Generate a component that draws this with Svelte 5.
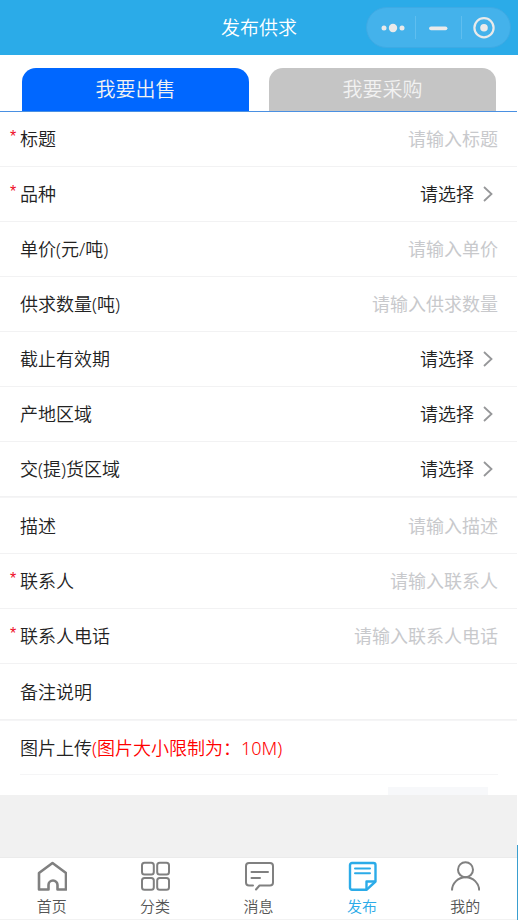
<script lang="ts">
  type Field = {
    id: string;
    label: string;
    kind: "text" | "select" | "textarea";
    placeholder?: string;
    required?: boolean;
    type?: "text" | "tel";
    section?: boolean;
  };

  const modes = [
    { id: "sell", label: "我要出售" },
    { id: "buy", label: "我要采购" },
  ];

  const fields: Field[] = [
    { id: "title", label: "标题", kind: "text", placeholder: "请输入标题", required: true },
    { id: "variety", label: "品种", kind: "select", required: true },
    { id: "price", label: "单价(元/吨)", kind: "text", placeholder: "请输入单价" },
    { id: "amount", label: "供求数量(吨)", kind: "text", placeholder: "请输入供求数量" },
    { id: "expires", label: "截止有效期", kind: "select" },
    { id: "origin", label: "产地区域", kind: "select" },
    { id: "delivery", label: "交(提)货区域", kind: "select" },
    { id: "description", label: "描述", kind: "textarea", placeholder: "请输入描述", section: true },
    { id: "contact", label: "联系人", kind: "text", placeholder: "请输入联系人", required: true },
    { id: "phone", label: "联系人电话", kind: "text", type: "tel", placeholder: "请输入联系人电话", required: true },
    { id: "remark", label: "备注说明", kind: "textarea" },
  ];

  const tabs = [
    { id: "home", label: "首页" },
    { id: "category", label: "分类" },
    { id: "message", label: "消息" },
    { id: "publish", label: "发布" },
    { id: "mine", label: "我的" },
  ];

  let mode = $state("sell");
  let activeTab = $state("publish");
  let values = $state<Record<string, string>>(Object.fromEntries(fields.map((f) => [f.id, ""])));
</script>

<div class="app">
  <header class="navbar">
    <h1>发布供求</h1>
    <div class="capsule">
      <button type="button" aria-label="更多">
        <svg width="24" height="24" viewBox="0 0 24 24" fill="currentColor">
          <circle cx="3" cy="12" r="2.5" />
          <circle cx="12" cy="12" r="4.2" />
          <circle cx="21" cy="12" r="2.5" />
        </svg>
      </button>
      <button type="button" aria-label="最小化">
        <svg width="24" height="24" viewBox="0 0 24 24" fill="none" stroke="currentColor">
          <path d="M5 12.3h14.5" stroke-width="3.8" stroke-linecap="round" />
        </svg>
      </button>
      <button type="button" aria-label="关闭">
        <svg width="24" height="24" viewBox="0 0 24 24" fill="none" stroke="currentColor">
          <circle cx="12" cy="11.8" r="9.6" stroke-width="2.2" />
          <circle cx="12" cy="11.8" r="3.8" fill="currentColor" stroke="none" />
        </svg>
      </button>
    </div>
  </header>

  <div class="modes" role="tablist">
    {#each modes as m (m.id)}
      <button
        type="button"
        role="tab"
        class="mode"
        class:active={mode === m.id}
        aria-selected={mode === m.id}
        onclick={() => (mode = m.id)}
      >
        {m.label}
      </button>
    {/each}
  </div>

  <form class="form">
    {#each fields as field (field.id)}
      <div class="cell" class:tall={field.kind === "textarea"} class:section={field.section}>
        <span class="mark" aria-hidden="true">{field.required ? "*" : ""}</span>
        <label for={field.id}>{field.label}</label>
        {#if field.kind === "select"}
          <select id={field.id} bind:value={values[field.id]} required={field.required}>
            <option value="">请选择</option>
          </select>
          <svg class="arrow" width="10" height="16" viewBox="0 0 10 16" fill="none" aria-hidden="true">
            <path d="M1 1l7.5 7L1 15" stroke="currentColor" stroke-width="1.8" />
          </svg>
        {:else if field.kind === "textarea"}
          <textarea id={field.id} rows="1" placeholder={field.placeholder} bind:value={values[field.id]}></textarea>
        {:else}
          <input
            id={field.id}
            type={field.type ?? "text"}
            placeholder={field.placeholder}
            required={field.required}
            bind:value={values[field.id]}
          />
        {/if}
      </div>
    {/each}

    <div class="cell section last">
      <span class="mark"></span>
      <label for="images">图片上传<span class="limit">(图片大小限制为：10M)</span></label>
    </div>
    <div class="uploader">
      <input id="images" type="file" accept="image/*" multiple />
    </div>
  </form>

  <div class="spacer"></div>

  <nav class="tabbar">
    {#each tabs as tab (tab.id)}
      <a
        href={`#${tab.id}`}
        class="tab"
        class:active={activeTab === tab.id}
        aria-current={activeTab === tab.id ? "page" : undefined}
        onclick={() => (activeTab = tab.id)}
      >
        <svg width="30" height="30" viewBox="0 0 30 30" fill="none" stroke="currentColor" stroke-width="2" aria-hidden="true">
          {#if tab.id === "home"}
            <path d="M2 28.5V12L15.5 2 29 12v16.5h-8.5V24a4.5 4.5 0 0 0-9 0v4.5z" stroke-width="2.6" stroke-linejoin="round" />
          {:else if tab.id === "category"}
            <rect x="2" y="1.8" width="11.8" height="11.8" rx="2.5" />
            <rect x="17.2" y="1.8" width="11.8" height="11.8" rx="2.5" />
            <rect x="2" y="17" width="11.8" height="11.8" rx="2.5" />
            <rect x="17.2" y="17" width="11.8" height="11.8" rx="2.5" />
          {:else if tab.id === "message"}
            <g stroke-linecap="round" stroke-linejoin="round">
              <path d="M9 24.500H5a3 3 0 0 1-3-3V5a3 3 0 0 1 3-3h21a3 3 0 0 1 3 3v16.500a3 3 0 0 1-3 3H15.500l-3.500 4" />
              <path d="M7.5 11H24M7.5 17H16" />
            </g>
          {:else if tab.id === "publish"}
            <g stroke-width="2.4" stroke-linejoin="round">
              <path d="M19.500 28.800H5A2 2 0 0 1 3 26.800V4a2 2 0 0 1 2-2h21.500a2 2 0 0 1 2 2v16.500z" />
              <path d="M28 20.5h-8.5v8" />
              <path d="M8 7.5h15M8 12.3h15" stroke-linecap="round" stroke-width="2" />
            </g>
          {:else}
            <circle cx="15.5" cy="8.7" r="7.5" />
            <path d="M2 29.5a13.6 13.3 0 0 1 27.2 0" />
          {/if}
        </svg>
        <span>{tab.label}</span>
      </a>
    {/each}
  </nav>
  <div class="edge"></div>
</div>

<style>
  :global(body) {
    background: #fff;
  }

  .app {
    position: relative;
    display: flex;
    flex-direction: column;
    height: 100vh;
    overflow: hidden;
    background: #fff;
    color: #222;
    font-family: "Noto Sans", "Noto Sans CJK SC", sans-serif;
    font-weight: 350;
    font-size: 18px;
    line-height: 24px;
  }

  button,
  input,
  select,
  textarea {
    margin: 0;
    padding: 0;
    border: 0;
    border-radius: 0;
    background: none;
    color: inherit;
    font: inherit;
  }

  button,
  select {
    cursor: pointer;
  }

  .navbar {
    display: grid;
    grid-template-columns: 1fr auto 1fr;
    flex: none;
    align-items: center;
    height: 55px;
    background: #2babe8;
    color: #fff;
  }

  h1 {
    grid-column: 2;
    margin: 0;
    font-size: 19px;
    font-weight: 350;
  }

  .capsule {
    display: flex;
    justify-self: end;
    box-sizing: border-box;
    width: 145px;
    height: 41px;
    margin-right: 7px;
    padding: 8px 0;
    border: 1px solid #3eaae4;
    border-radius: 21px;
    background: #44b2eb;
    color: #eaeaea;
  }

  .capsule button {
    display: flex;
    flex: 1;
    align-items: center;
    justify-content: center;
  }

  .capsule button:first-child {
    padding-left: 4px;
  }

  .capsule button:last-child {
    padding-right: 4px;
  }

  .capsule button + button {
    border-left: 1px solid #5fbeef;
  }

  .modes {
    display: flex;
    flex: none;
    gap: 20px;
    margin-right: 1px;
    padding: 13px 21px 0 22px;
    border-bottom: 1px solid #4a90e2;
  }

  .mode {
    flex: 1;
    height: 43px;
    border-radius: 14px 14px 0 0;
    background: #c5c5c5;
    color: #f2f2f2;
    font-size: 20px;
  }

  .mode.active {
    background: #0067ff;
  }

  .form {
    flex: 1;
    min-height: 0;
    margin-right: 1px;
    overflow-y: auto;
    scrollbar-width: none;
  }

  .cell {
    display: flex;
    align-items: center;
    box-sizing: border-box;
    height: 55px;
    padding: 0 19px 0 10px;
    border-bottom: 1px solid #f2f2f3;
  }

  .cell.tall {
    height: 56px;
  }

  .cell.section {
    border-top: 1px solid #f5f5f6;
  }

  .cell.tall.section {
    height: 57px;
  }

  .mark {
    flex: none;
    width: 10px;
    padding-bottom: 5px;
    color: #ee0a24;
    font-family: "Liberation Sans", sans-serif;
    font-weight: 400;
    font-size: 16px;
  }

  .cell label {
    flex: none;
  }

  .limit {
    color: #f00;
  }

  .cell input,
  .cell select,
  .cell textarea {
    flex: 1;
    min-width: 0;
    height: 24px;
    outline: none;
    text-align: right;
  }

  .cell textarea {
    resize: none;
    overflow: hidden;
  }

  .cell select {
    appearance: none;
    text-align-last: right;
  }

  .cell ::placeholder {
    color: #c8c9cc;
    font-weight: 400;
    opacity: 1;
  }

  .arrow {
    flex: none;
    margin: 0 5px 0 9px;
    color: #969799;
  }

  .cell.last {
    position: relative;
    border-bottom: 0;
  }

  .cell.last::after {
    content: "";
    position: absolute;
    right: 19px;
    bottom: 0;
    left: 20px;
    border-bottom: 1px solid #f5f5f6;
  }

  .uploader {
    display: flex;
    justify-content: flex-end;
    padding: 12px 29px 12px 20px;
  }

  .uploader input {
    width: 100px;
    height: 100px;
    background: #f7f8fa;
    color: transparent;
    cursor: pointer;
  }

  .uploader input::file-selector-button {
    display: none;
  }

  .spacer {
    flex: none;
    height: 62px;
    margin-right: 1px;
    background: #f1f1f1;
  }

  .tabbar {
    display: flex;
    flex: none;
    box-sizing: border-box;
    height: 63px;
    margin-right: 1px;
    border-top: 1px solid #ebebeb;
    border-bottom: 1px solid #f2f2f2;
  }

  .tab {
    display: flex;
    flex: 1;
    flex-direction: column;
    align-items: center;
    gap: 5px;
    padding-top: 3px;
    color: #555;
    font-size: 15px;
    line-height: 20px;
    text-decoration: none;
  }

  .tab svg {
    color: #808080;
  }

  .tab.active,
  .tab.active svg {
    color: #2babe8;
  }

  .edge {
    position: absolute;
    right: 0;
    bottom: 0;
    width: 1px;
    height: 75px;
    background: #3a9fd0;
  }
</style>
